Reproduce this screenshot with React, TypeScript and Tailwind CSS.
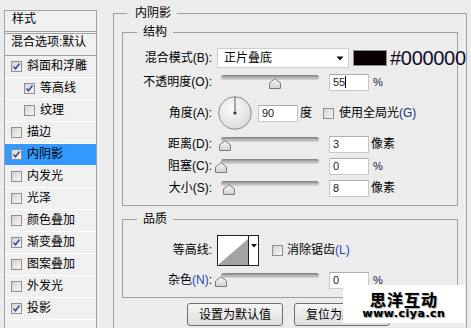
import React from 'react'

const font = "font-['Liberation_Sans','Noto_Sans_CJK_SC',sans-serif]"

function Check({ on }: { on?: boolean }) {
  return (
    <span className="flex w-[11px] h-[11px] shrink-0 items-center justify-center border border-[#8f8f8f] bg-gradient-to-br from-[#d4d4d4] to-[#f7f7f7]">
      {on && (
        <svg width="9" height="9" viewBox="0 0 9 9">
          <path d="M1.5 4.5 L3.5 6.8 L7.5 1.5" stroke="#3a4f9a" strokeWidth="1.6" fill="none" />
        </svg>
      )}
    </span>
  )
}

function Slider({ thumb }: { thumb: number }) {
  // thumb = centre offset inside the 110px box
  return (
    <div className="relative w-[110px] h-[16px] shrink-0">
      <div className="absolute left-[6px] top-[1px] w-[98px] h-[5px] rounded-[3px] bg-gradient-to-b from-[#7d7d7d] via-[#b4b4b4] to-[#d6d6d6]" />
      <svg className="absolute top-[4px]" style={{ left: thumb - 6 }} width="12" height="11" viewBox="0 0 12 11">
        <defs>
          <linearGradient id="tg" x1="0" y1="0" x2="0" y2="1">
            <stop offset="0" stopColor="#fafafa" />
            <stop offset="1" stopColor="#cfcfcf" />
          </linearGradient>
        </defs>
        <path d="M0.5 10.5 L0.5 5 L6 0.7 L11.5 5 L11.5 10.5 Z" fill="url(#tg)" stroke="#7a7a7a" />
      </svg>
    </div>
  )
}

function Field({ value, caret }: { value: string; caret?: boolean }) {
  return (
    <div className="flex items-center w-[40px] h-[17px] shrink-0 bg-white border border-[#c3c7cf] border-t-[#a9adb5] pl-[3px] text-[11px] leading-[13px] text-[#1a1a1a]">
      {value}
      {caret && <span className="w-[1px] h-[12px] bg-black" />}
    </div>
  )
}

function Label({ children }: { children: React.ReactNode }) {
  return <div className="w-[89px] shrink-0 text-right text-[12px] leading-[16px] text-black">{children}</div>
}

function Dial() {
  return (
    <svg width="34" height="34" viewBox="0 0 34 34" className="shrink-0">
      <defs>
        <radialGradient id="dg" cx="0.4" cy="0.35" r="0.7">
          <stop offset="0" stopColor="#fcfcfc" />
          <stop offset="1" stopColor="#dadada" />
        </radialGradient>
      </defs>
      <circle cx="17" cy="17" r="16.3" fill="url(#dg)" stroke="#8a8a8a" />
      <line x1="17" y1="17" x2="17" y2="1" stroke="#5a5a5a" />
      <circle cx="17" cy="17" r="1.6" fill="#333" />
    </svg>
  )
}

function Legend({ children, first }: { children: React.ReactNode; first?: boolean }) {
  return (
    <legend className={`${first ? 'ml-[13px] pl-[8px] pr-[6px]' : 'ml-[14px] px-[6px]'} text-[12px] leading-[16px] text-black`}>
      {children}
    </legend>
  )
}

export default function App() {
  const items = [
    { name: '斜面和浮雕', on: true },
    { name: '等高线', on: true, sub: true },
    { name: '纹理', sub: true },
    { name: '描边' },
    { name: '内阴影', on: true, active: true },
    { name: '内发光' },
    { name: '光泽' },
    { name: '颜色叠加' },
    { name: '渐变叠加', on: true },
    { name: '图案叠加' },
    { name: '外发光' },
    { name: '投影', on: true },
  ]

  return (
    <div className={`relative w-[471px] h-[328px] overflow-hidden bg-[#ececec] ${font} flex items-start`}>
      {/* styles list */}
      <div className="ml-[4px] mt-[10px] w-[93px] shrink-0 border border-[#a0a0a0] bg-[#f0f0f0]">
        <div className="h-[21px] border-b border-[#a0a0a0] pl-[7px] pt-[1px] text-[12px] leading-[14px]">样式</div>
        <div className="h-[1px] bg-[#f0f0f0]" />
        <div className="h-[23px] border-y border-[#a0a0a0] pl-[6px] pt-[1px] text-[12px] leading-[14px] whitespace-nowrap">混合选项:默认</div>
        {items.map((it) => (
          <div
            key={it.name}
            className={`flex items-center h-[22px] border-b border-white pb-[1px] text-[12px] leading-[14px] whitespace-nowrap ${it.sub ? 'pl-[19px]' : 'pl-[6px]'} ${it.active ? 'bg-[#3399ff]' : ''}`}
          >
            <Check on={it.on} />
            <span className="ml-[5px]">{it.name}</span>
          </div>
        ))}
        <div className="h-[20px]" />
      </div>

      {/* inner shadow panel */}
      <fieldset className="ml-[16px] mt-[5px] w-[354px] min-w-0 shrink-0 border border-[#a0a0a0] pb-[40px]">
        <Legend first>内阴影</Legend>

        <fieldset className="mx-[8px] mt-[3px] min-w-0 border border-[#a0a0a0] pb-[6px]">
          <Legend>结构</Legend>
          <div className="mt-[7px] flex items-center h-[22px]">
            <Label>混合模式(B):</Label>
            <div className="ml-[5px] flex shrink-0 items-center justify-between w-[132px] h-[20px] bg-white border border-[#cfcfcf] pl-[6px] pr-[4px] text-[12px] leading-[14px]">
              <span>正片叠底</span>
              <svg width="8" height="5" viewBox="0 0 8 5">
                <path d="M0.5 0.5 L7.5 0.5 L4 4.5 Z" fill="#111" />
              </svg>
            </div>
            <div className="ml-[4px] w-[34px] h-[16px] border border-[#8c8c8c] bg-[#0b0000] shrink-0" />
            <span className="ml-[3px] shrink-0 text-[20px] leading-[20px] tracking-[-0.3px] text-[#0e0e28] whitespace-nowrap">#000000</span>
          </div>

          <div className="mt-[2px] flex items-center h-[22px]">
            <Label>不透明度(O):</Label>
            <div className="ml-[3px]"><Slider thumb={60} /></div>
            <div className="ml-[4px]"><Field value="55" caret /></div>
            <span className="ml-[4px] text-[11px] text-[#1a1a40]">%</span>
          </div>

          <div className="mt-[3px] flex items-center h-[34px]">
            <Label>角度(A):</Label>
            <div className="ml-[6px]"><Dial /></div>
            <div className="ml-[6px]"><Field value="90" /></div>
            <span className="ml-[2px] text-[12px] leading-[14px]">度</span>
            <div className="ml-[11px]"><Check /></div>
            <span className="ml-[5px] text-[12px] leading-[14px] whitespace-nowrap">使用全局光<span className="text-[#1c2f7a]">(G)</span></span>
          </div>

          {[
            { l: '距离(D):', t: 9.5, v: '3', u: '像素' },
            { l: '阻塞(C):', t: 6, v: '0', u: '%' },
            { l: '大小(S):', t: 14, v: '8', u: '像素' },
          ].map((r, i) => (
            <div key={r.l} className={`${i === 0 ? 'mt-[3px]' : ''} flex items-center h-[22px]`}>
              <Label>{r.l}</Label>
              <div className="ml-[3px]"><Slider thumb={r.t} /></div>
              <div className="ml-[4px]"><Field value={r.v} /></div>
              <span className={`${r.u === '%' ? 'ml-[4px] text-[11px] text-[#1a1a40]' : 'ml-[2px] text-[12px]'} leading-[14px]`}>{r.u}</span>
            </div>
          ))}
        </fieldset>

        <fieldset className="mx-[8px] mt-[5px] min-w-0 border border-[#a0a0a0] pb-[6px]">
          <Legend>品质</Legend>
          <div className="mt-[7px] flex items-center h-[32px]">
            <Label>等高线:</Label>
            <div className="ml-[5px] flex w-[42px] h-[31px] border border-[#222] bg-white shrink-0">
              <svg width="30" height="29" viewBox="0 0 30 29" className="shrink-0">
                <path d="M1 28 L30 3 L30 29 L1 29 Z" fill="#a3a3a3" />
              </svg>
              <div className="w-[1px] bg-[#222]" />
              <div className="flex-1 flex justify-center pt-[8px]">
                <svg width="6" height="4" viewBox="0 0 6 4">
                  <path d="M0 0 L6 0 L3 3.5 Z" fill="#111" />
                </svg>
              </div>
            </div>
            <div className="ml-[13px]"><Check /></div>
            <span className="ml-[4px] text-[12px] leading-[14px] whitespace-nowrap">消除锯齿<span className="text-[#1f46b8]">(L)</span></span>
          </div>
          <div className="mt-[3px] flex items-center h-[22px]">
            <Label>杂色<span className="text-[#1f46b8]">(N)</span>:</Label>
            <div className="ml-[3px]"><Slider thumb={6} /></div>
            <div className="ml-[4px]"><Field value="0" /></div>
            <span className="ml-[4px] text-[11px] leading-[14px] text-[#1a1a40]">%</span>
          </div>
        </fieldset>

        <div className="mt-[5px] flex pl-[73px] gap-[11px]">
          <button className="w-[96px] h-[23px] shrink-0 rounded-[3px] border border-[#707070] bg-gradient-to-b from-[#f6f6f6] to-[#dddddd] text-[12px] leading-[14px] text-black">设置为默认值</button>
          <button className="w-[96px] h-[23px] shrink-0 rounded-[3px] border border-[#707070] bg-gradient-to-b from-[#f6f6f6] to-[#dddddd] text-[12px] leading-[14px] text-black">复位为默认值</button>
        </div>
      </fieldset>

      {/* watermark */}
      <div className="absolute left-[343px] top-[285px] w-[122px] h-[38px] bg-white flex flex-col items-center pt-[6px]">
        <span className="text-[16px] leading-[16px] font-bold tracking-[1px] text-black [text-shadow:0_0_1px_#777,1px_1px_0_#bbb] font-['Noto_Sans_CJK_SC',sans-serif]">思洋互动</span>
        <span className="mt-[1px] text-[11px] leading-[11px] font-bold tracking-[0.5px] text-black [text-shadow:0_0_1px_#777,1px_1px_0_#aaa] font-['DejaVu_Sans',sans-serif]">www.ciya.cn</span>
      </div>
    </div>
  )
}
